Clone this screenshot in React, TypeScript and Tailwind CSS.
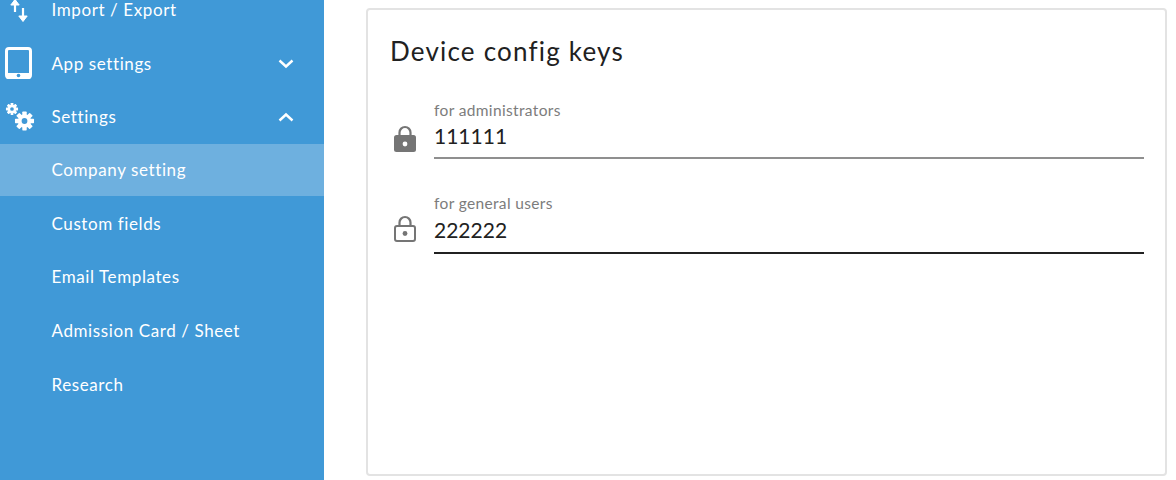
import React from "react";

function Chevron({ up }: { up?: boolean }) {
  return (
    <svg width="18" height="12" viewBox="0 0 18 12" fill="none" stroke="white" strokeWidth="2.4" className="mr-[29px]">
      <path d={up ? "M2.5 9.5 L9 3.5 L15.5 9.5" : "M2.5 2.5 L9 8.5 L15.5 2.5"} />
    </svg>
  );
}

function Gear({ cx, cy, r }: { cx: number; cy: number; r: number }) {
  const teeth = Array.from({ length: 8 }, (_, i) => i * 45);
  return (
    <g>
      {teeth.map((a) => (
        <rect key={a} x={cx - r * 0.26} y={cy - r * 1.12} width={r * 0.52} height={r * 0.6} rx={r * 0.08} fill="white" transform={`rotate(${a} ${cx} ${cy})`} />
      ))}
      <circle cx={cx} cy={cy} r={r * 0.78} fill="white" />
      <circle cx={cx} cy={cy} r={r * 0.34} fill="#4099d7" />
    </g>
  );
}

function Row({ h, icon, label, chevron, active }: { h: string; icon?: React.ReactNode; label: string; chevron?: "up" | "down"; active?: boolean }) {
  return (
    <div className={`flex items-center ${h} ${active ? "bg-[#6eb0df]" : ""}`}>
      <div className="w-[51.5px] shrink-0 relative h-full flex items-center">{icon}</div>
      <span className="flex-1 text-[17px] text-white tracking-[0.6px]">{label}</span>
      {chevron && <Chevron up={chevron === "up"} />}
    </div>
  );
}

function Field({ label, value, filled, lineClass, mt, lockPad, valueGap, linePad }: { label: string; value: string; filled?: boolean; lineClass: string; mt: string; lockPad: string; valueGap: string; linePad: string }) {
  return (
    <div className={`flex items-end ${mt}`}>
      <div className={`w-[44px] shrink-0 pl-[4px] ${lockPad}`}>
        <svg width="22" height="28" viewBox="0 0 22 28" fill="none" className="block">
          <path d="M5.5 13 V8.5 a5.5 5.5 0 0 1 11 0 V13" stroke="#757575" strokeWidth="2.2" />
          {filled ? (
            <>
              <rect x="0" y="11" width="22" height="17" rx="2.5" fill="#757575" />
              <circle cx="11" cy="20" r="2.4" fill="white" />
            </>
          ) : (
            <>
              <rect x="1" y="12" width="20" height="15" rx="2" stroke="#757575" strokeWidth="2" />
              <circle cx="11" cy="19.5" r="2.4" fill="#757575" />
            </>
          )}
        </svg>
      </div>
      <div className={`flex-1 border-b-2 ${lineClass} ${linePad}`}>
        <div className="text-[15.5px] leading-[18px] text-[#7c7c7c] tracking-[0.35px]">{label}</div>
        <div className={`${valueGap} text-[21px] leading-[30px] text-[#212121]`}>{value}</div>
      </div>
    </div>
  );
}

export default function App() {
  return (
    <div className="flex h-[480px] w-[1176px] overflow-hidden bg-white font-['Lato',sans-serif]">
      <aside className="w-[324px] shrink-0 bg-[#4099d7] h-full overflow-hidden">
        <div className="-mt-[17px]">
          <Row
            h="h-[54px]"
            label="Import / Export"
            icon={
              <svg width="24" height="30" viewBox="0 0 24 30" className="absolute left-[8px] top-[14px]" fill="none" stroke="white" strokeWidth="2.2">
                <path d="M7 15 V3" />
                <path d="M2.8 8 L7 2.5 L11.2 8 Z" fill="white" strokeWidth="1" />
                <path d="M15 11 V23" />
                <path d="M10.8 19 L15 24.5 L19.2 19 Z" fill="white" strokeWidth="1" />
              </svg>
            }
          />
          <Row
            h="h-[54px]"
            label="App settings"
            chevron="down"
            icon={
              <svg width="28" height="34" viewBox="0 0 28 34" className="absolute left-[5px] top-[10px]">
                <rect x="1.5" y="1.5" width="24" height="29" rx="2.5" fill="none" stroke="white" strokeWidth="3" />
                <rect x="1" y="26" width="25" height="6" rx="2" fill="white" />
                <circle cx="13.5" cy="28.5" r="1.8" fill="#4099d7" />
              </svg>
            }
          />
          <Row
            h="h-[53px] pb-[2px]"
            label="Settings"
            chevron="up"
            icon={
              <svg width="30" height="32" viewBox="0 0 30 32" className="absolute left-[5px] top-[10px]">
                <Gear cx={7} cy={8} r={5.4} />
                <Gear cx={19.5} cy={20} r={8.5} />
              </svg>
            }
          />
          <Row h="h-[52px]" label="Company setting" active />
          <Row h="h-[55px]" label="Custom fields" />
          <Row h="h-[52px]" label="Email Templates" />
          <Row h="h-[55px]" label="Admission Card / Sheet" />
          <Row h="h-[53px]" label="Research" />
        </div>
      </aside>
      <main className="flex-1 pl-[42px] pr-[9px] pt-[8px] pb-[4px]">
        <section className="h-full rounded-[4px] border-2 border-[#e3e3e3] pl-[22px] pr-[21px] pt-[25px]">
          <h2 className="text-[26px] leading-[32px] text-[#212121] font-normal tracking-[1.2px]">Device config keys</h2>
          <Field mt="mt-[34px]" lockPad="pb-[7px]" valueGap="mt-[2px]" linePad="pb-[6px]" label="for administrators" value="111111" filled lineClass="border-[#8f8f8f]" />
          <Field mt="mt-[35px]" lockPad="pb-[12px]" valueGap="mt-[3px]" linePad="pb-[7px]" label="for general users" value="222222" lineClass="border-[#212121]" />
        </section>
      </main>
    </div>
  );
}
